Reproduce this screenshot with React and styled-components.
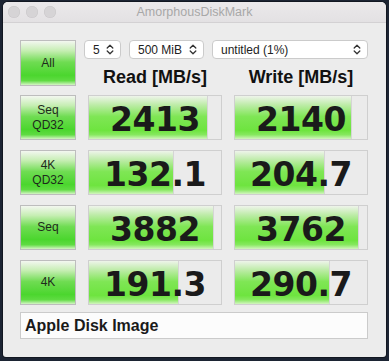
import React from 'react';
import styled, { createGlobalStyle } from 'styled-components';

const GlobalStyle = createGlobalStyle`
html, body {
  margin: 0;
  padding: 0;
  background: #1c2433;
  width: 389px;
  height: 361px;
  overflow: hidden;
}`;

const Window = styled.div`
margin: 2px 0 0 3px;
width: 383px;
height: 355px;
background: #ececec;
border-radius: 5px 5px 3px 3px;
overflow: hidden;
display: flex;
flex-direction: column;
box-shadow: 0 0 0 1px rgba(0,0,0,0.35);`;

const TitleBar = styled.div`
height: 20px;
flex-shrink: 0;
display: grid;
grid-template-columns: 1fr auto 1fr;
align-items: center;
background: linear-gradient(to bottom, #ebe9eb, #e3e1e3);
border-bottom: 1px solid #d3d1d3;
padding: 0 5px;`;

const Lights = styled.div`
display: flex;
gap: 6px;`;

const Light = styled.span`
width: 12px;
height: 12px;
border-radius: 50%;
background: #d6d4d6;
box-shadow: inset 0 0 0 0.5px #c9c7c9;`;

const Title = styled.div`
font-family: "Liberation Sans", Arial, sans-serif;
font-size: 12.5px;
color: #a8a8a8;`;

const Content = styled.div`
padding: 17px 18px 0 17px;
display: flex;
flex-direction: column;`;

const Top = styled.div`
display: flex;
gap: 12px;`;

const GreenButton = styled.div`
width: ${({ $w }) => $w || 56}px;
height: ${({ $h }) => $h || 45}px;
box-sizing: border-box;
flex-shrink: 0;
border: 1px solid #bdbdbd;
background: linear-gradient(to bottom, #f3f7f0 0%, #c6eeb3 22%, #6fdc52 48%, #4bd62e 78%, #5fdb42 90%, #d5f5c5 100%);
display: flex;
align-items: center;
justify-content: center;
text-align: center;
font-family: "Liberation Sans", Arial, sans-serif;
font-size: 12px;
line-height: 15px;
color: #1e2a1c;`;

const TopRight = styled.div`
display: flex;
flex-direction: column;
width: 280px;`;

const Selects = styled.div`
display: flex;
gap: 8px;
height: 19px;
margin-left: -4px;`;

const Select = styled.div`
width: ${({ $w }) => $w}px;
box-sizing: border-box;
background: #ffffff;
border: 1px solid #cbcbcb;
border-radius: 4px;
display: flex;
align-items: center;
justify-content: space-between;
padding: 0 6px 0 8px;
font-family: "Liberation Sans", Arial, sans-serif;
font-size: 12px;
color: #222;`;

const Headers = styled.div`
display: grid;
grid-template-columns: 134px 134px;
column-gap: 12px;
height: 27px;
align-items: end;`;

const Header = styled.div`
text-align: center;
font-family: "Liberation Sans", Arial, sans-serif;
font-weight: bold;
font-size: 18px;
line-height: 1;
color: #111;`;

const Rows = styled.div`
margin-top: 9px;
display: flex;
flex-direction: column;
gap: 10px;`;

const Row = styled.div`
display: grid;
grid-template-columns: 56px 134px 134px;
column-gap: 12px;
height: 45px;`;

const Result = styled.div`
position: relative;
box-sizing: border-box;
border: 1px solid #cfcfcf;
background: #ebebeb;
display: flex;
align-items: center;
justify-content: center;
overflow: hidden;`;

const Bar = styled.div`
position: absolute;
left: 0;
top: 0;
bottom: 0;
background: linear-gradient(to bottom, #eef4ea 0%, #bfecaa 20%, #7fe655 48%, #6ee43f 80%, #86e85f 90%, #d3f5c0 100%);
border-right: 1px solid #d5d5d5;`;

const Value = styled.span`
position: relative;
padding-top: 4px;
font-family: "DejaVu Sans", Verdana, sans-serif;
font-weight: bold;
font-size: 33px;
letter-spacing: -0.5px;
color: #1a1a1a;`;

const NameBox = styled.div`
margin-top: 7px;
width: 348px;
height: 27px;
box-sizing: border-box;
background: #fcfcfc;
border: 1px solid #cbcbcb;
display: flex;
align-items: center;
padding-left: 4px;
font-family: "Liberation Sans", Arial, sans-serif;
font-weight: bold;
font-size: 16px;
color: #1a1a1a;`;

const Chevrons = () => (
  <svg width="8" height="11" viewBox="0 0 8 11" fill="none" stroke="#333" strokeWidth="1.3" strokeLinecap="round" strokeLinejoin="round">
    <path d="M1.2 4 L4 1.3 L6.8 4" />
    <path d="M1.2 7 L4 9.7 L6.8 7" />
  </svg>
);

const rows = [
  { label: ['Seq', 'QD32'], read: '2413', rw: 118, write: '2140', ww: 116 },
  { label: ['4K', 'QD32'], read: '132.1', rw: 84, write: '204.7', ww: 89 },
  { label: ['Seq'], read: '3882', rw: 124, write: '3762', ww: 123 },
  { label: ['4K'], read: '191.3', rw: 89, write: '290.7', ww: 94 },
];

const App = () => {
  return (
    <>
      <GlobalStyle />
      <Window>
        <TitleBar>
          <Lights>
            <Light />
            <Light />
            <Light />
          </Lights>
          <Title>AmorphousDiskMark</Title>
          <div />
        </TitleBar>
        <Content>
          <Top>
            <GreenButton $h={46}>All</GreenButton>
            <TopRight>
              <Selects>
                <Select $w={37}>5<Chevrons /></Select>
                <Select $w={75}>500 MiB<Chevrons /></Select>
                <Select $w={156}>untitled (1%)<Chevrons /></Select>
              </Selects>
              <Headers>
                <Header>Read [MB/s]</Header>
                <Header>Write [MB/s]</Header>
              </Headers>
            </TopRight>
          </Top>
          <Rows>
            {rows.map((r, i) => (
              <Row key={i}>
                <GreenButton>
                  <div>{r.label.map((l, j) => <div key={j}>{l}</div>)}</div>
                </GreenButton>
                <Result>
                  <Bar style={{ width: r.rw }} />
                  <Value>{r.read}</Value>
                </Result>
                <Result>
                  <Bar style={{ width: r.ww }} />
                  <Value>{r.write}</Value>
                </Result>
              </Row>
            ))}
          </Rows>
          <NameBox>Apple Disk Image</NameBox>
        </Content>
      </Window>
    </>
  );
};

export default App;
